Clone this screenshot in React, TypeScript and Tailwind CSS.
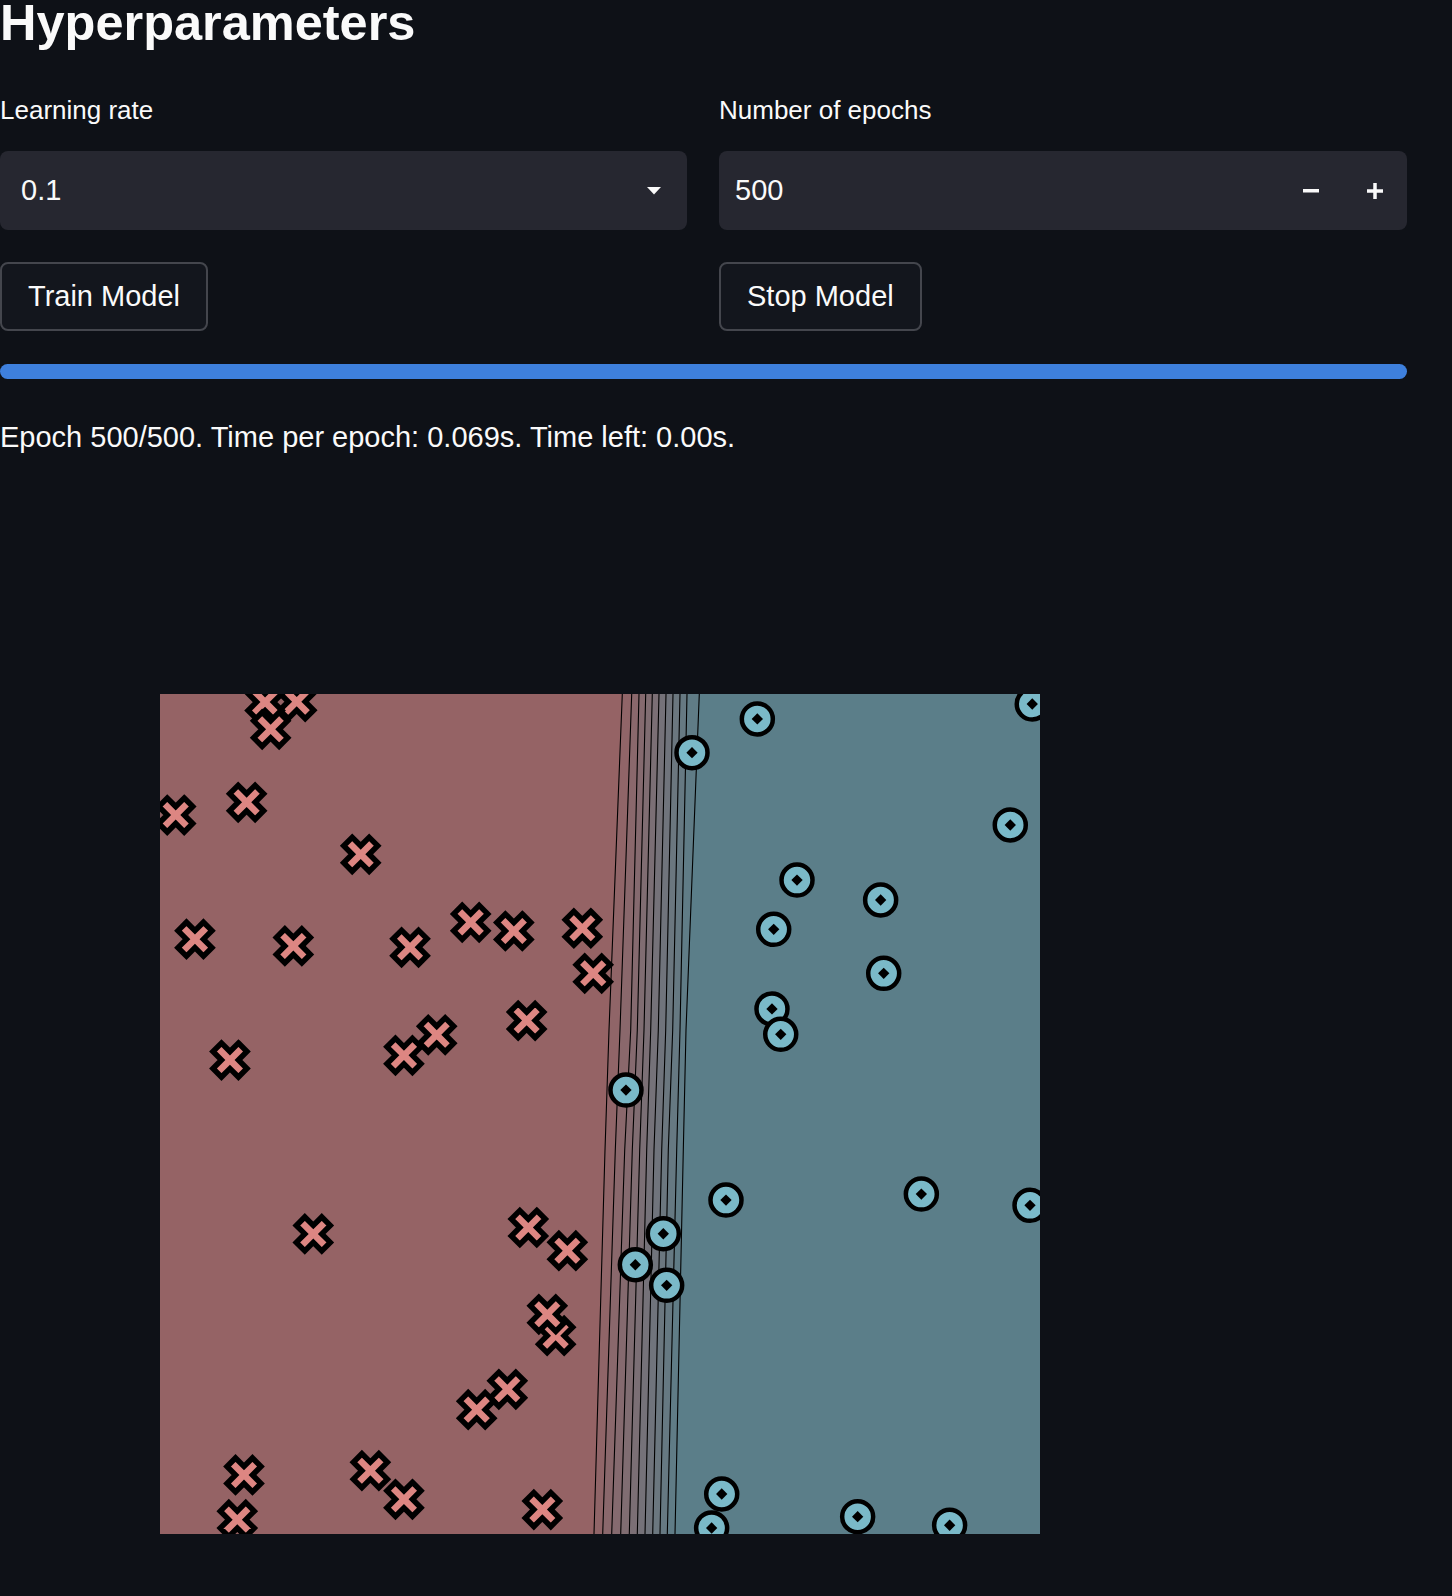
import React from "react";

const S = 1.0175;
const tx = (x: number) => x * S - 160;
const ty = (y: number) => y * S - 694;

const crosses: [number, number][] = [
  [291.6, 689.6], [260.5, 690], [266, 716.8], [172.7, 801], [242.4, 788.5], [354.5, 839.6],
  [191.6, 923], [288.3, 929.7], [403, 931], [462.6, 906.5], [505, 915], [572.3, 912.3],
  [583, 956.6], [517.6, 1003], [429.2, 1017], [397, 1037.2], [226, 1041.8], [307.9, 1212.7],
  [519.2, 1206.4], [557.6, 1229.2], [546.1, 1312.7], [537.9, 1291.7], [498.6, 1365.4],
  [468.5, 1385.4], [239.8, 1449.6], [233.2, 1493.5], [364, 1445.4], [397, 1473.5], [533, 1483.6],
];

const circles: [number, number][] = [
  [744.3, 706.6], [1014.5, 691.9], [680.1, 739.7], [992.9, 810.8], [783.3, 864.9], [865.5, 884.5],
  [760.4, 913.3], [868.5, 956.6], [758.7, 991.6], [767.3, 1016.5], [615.2, 1071.3], [713.5, 1179.4],
  [905.5, 1173.5], [1012.3, 1184.6], [651.9, 1212.5], [624.4, 1243], [655.2, 1263.2],
  [699.4, 1501.7], [709.3, 1468.3], [842.9, 1490.6], [933.3, 1499],
];

const Ys = [0, 336, 456, 840];
const lines: number[][] = [
  [462.3, 449, 445, 434],
  [471.7, 460, 455.3, 442.7],
  [479, 470.7, 464.7, 451.7],
  [485.7, 477.3, 472.3, 460.7],
  [492.3, 484, 479.7, 469.3],
  [499, 490.7, 486.7, 477.3],
  [506, 498.3, 494, 485],
  [513, 505.7, 501.7, 492.7],
  [520, 512.7, 508.3, 500],
  [527, 520, 516.7, 507.3],
  [539.3, 526, 523.3, 515],
];

const red = [149, 99, 101];
const teal = [91, 126, 137];
const mix = (t: number) =>
  `rgb(${red.map((c, i) => Math.round(c + (teal[i] - c) * t)).join(",")})`;

const W = 6;
const L = 18;
const plusPts = [
  [-W, -L], [W, -L], [W, -W], [L, -W], [L, W], [W, W], [W, L], [-W, L], [-W, W], [-L, W], [-L, -W], [-W, -W],
]
  .map((p) => p.join(","))
  .join(" ");

function Plot() {
  return (
    <svg width={880} height={840} viewBox="0 0 880 840" className="block">
      <rect x={0} y={0} width={880} height={840} fill={mix(1)} />
      {lines
        .map((ln, j) => ({ ln, j }))
        .reverse()
        .map(({ ln, j }) => {
          const pts = ["0,0", ...ln.map((x, k) => `${x},${Ys[k]}`), "0,840"].join(" ");
          return <polygon key={"b" + j} points={pts} fill={mix(j / 11)} />;
        })}
      {lines.map((ln, j) => (
        <polyline
          key={"l" + j}
          points={ln.map((x, k) => `${x},${Ys[k]}`).join(" ")}
          fill="none"
          stroke="#000000"
          strokeWidth={1.1}
        />
      ))}
      {crosses.map(([x, y], i) => (
        <g key={"c" + i} transform={`translate(${tx(x)} ${ty(y)}) rotate(45)`}>
          <polygon points={plusPts} fill="#dd8682" stroke="#000" strokeWidth={5.5} strokeLinejoin="miter" />
        </g>
      ))}
      {circles.map(([x, y], i) => (
        <g key={"o" + i} transform={`translate(${tx(x)} ${ty(y)})`}>
          <circle r={15.5} fill="#7ab9c8" stroke="#000" strokeWidth={4.5} />
          <rect x={-4} y={-4} width={8} height={8} fill="#000" transform="rotate(45)" />
        </g>
      ))}
    </svg>
  );
}

export default function App() {
  return (
    <div className="min-h-[1596px] w-full overflow-hidden bg-[#0e1117] font-['Liberation_Sans',Arial,sans-serif] text-[#fafafa]">
      <div className="w-[1407px]">
        <h3 className="-mt-[3px] h-[52px] whitespace-nowrap text-[50.5px] font-bold leading-[52px]">
          Hyperparameters
        </h3>
        <div className="mt-[46px] grid grid-cols-[687px_688px] gap-x-[32px]">
          <div className="flex flex-col">
            <div className="h-[30px] whitespace-nowrap text-[26px] leading-[30px]">Learning rate</div>
            <div className="mt-[26px] flex h-[79px] items-center justify-between rounded-[8px] bg-[#262730] pl-[21px] pr-[26px] text-[29px]">
              <span>0.1</span>
              <svg width="14" height="8" viewBox="0 0 14 8">
                <path d="M0 0H14L7 7.5Z" fill="#fafafa" />
              </svg>
            </div>
            <div className="mt-[32px] flex">
              <button className="h-[69px] whitespace-nowrap rounded-[8px] border-2 border-[#44464d] bg-[#13161d] px-[26px] text-[29px] text-[#fafafa]">
                Train Model
              </button>
            </div>
          </div>
          <div className="flex flex-col">
            <div className="h-[30px] whitespace-nowrap text-[26px] leading-[30px]">Number of epochs</div>
            <div className="mt-[26px] flex h-[79px] items-center rounded-[8px] bg-[#262730] pl-[16px] text-[29px]">
              <span className="flex-1">500</span>
              <div className="flex h-full w-[64px] items-center justify-center">
                <svg width="16" height="4" viewBox="0 0 16 4">
                  <rect x="0" y="0" width="16" height="3.5" fill="#fafafa" />
                </svg>
              </div>
              <div className="flex h-full w-[64px] items-center justify-center">
                <svg width="16" height="16" viewBox="0 0 16 16">
                  <rect x="0" y="6.25" width="16" height="3.5" fill="#fafafa" />
                  <rect x="6.25" y="0" width="3.5" height="16" fill="#fafafa" />
                </svg>
              </div>
            </div>
            <div className="mt-[32px] flex">
              <button className="h-[69px] whitespace-nowrap rounded-[8px] border-2 border-[#44464d] bg-[#13161d] px-[26px] text-[29px] text-[#fafafa]">
                Stop Model
              </button>
            </div>
          </div>
        </div>
        <div className="mt-[33px] h-[15px] rounded-full bg-[#3e80dd]" />
        <div className="mt-[40px] h-[36px] whitespace-nowrap text-[29px] leading-[36px]">
          Epoch 500/500. Time per epoch: 0.069s. Time left: 0.00s.
        </div>
        <div className="ml-[160px] mt-[239px] w-[880px]">
          <Plot />
        </div>
      </div>
    </div>
  );
}
